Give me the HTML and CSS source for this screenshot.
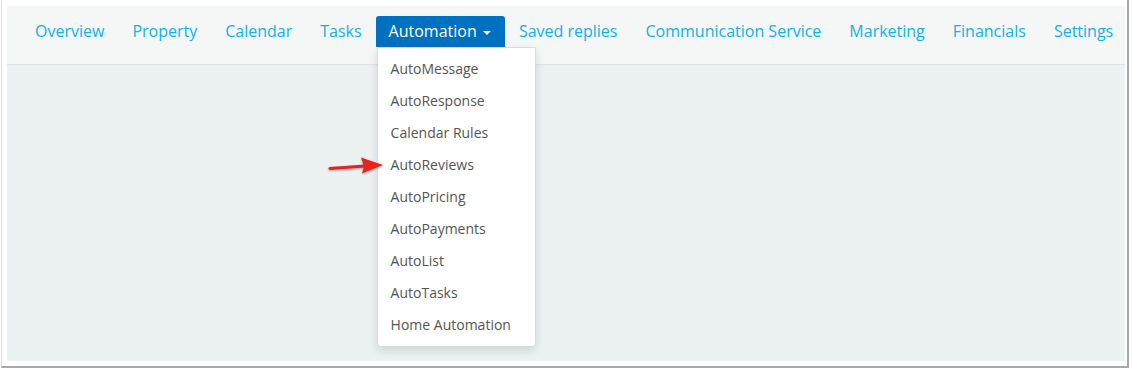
FILE: index.html
```html
<!DOCTYPE html>
<html>
<head>
    <title>Automation menu</title>
    <link rel="stylesheet" href="styles.css">
</head>
<body>
    <div class="frame">
        <div class="app">
            <nav class="navbar">
                <a class="nav-link" href="#">Overview</a>
                <a class="nav-link" href="#">Property</a>
                <a class="nav-link" href="#">Calendar</a>
                <a class="nav-link" href="#">Tasks</a>
                <div class="nav-dropdown">
                    <a class="nav-link active" href="#">Automation <span class="caret"></span></a>
                    <ul class="dropdown-menu">
                        <li><a href="#">AutoMessage</a></li>
                        <li><a href="#">AutoResponse</a></li>
                        <li><a href="#">Calendar Rules</a></li>
                        <li><a href="#">AutoReviews</a></li>
                        <li><a href="#">AutoPricing</a></li>
                        <li><a href="#">AutoPayments</a></li>
                        <li><a href="#">AutoList</a></li>
                        <li><a href="#">AutoTasks</a></li>
                        <li><a href="#">Home Automation</a></li>
                    </ul>
                    <svg class="pointer" width="60" height="24" viewBox="0 0 60 24">
                        <defs>
                            <filter id="sh" x="-20%" y="-40%" width="140%" height="180%">
                                <feDropShadow dx="0" dy="1" stdDeviation="1" flood-color="#000" flood-opacity="0.35"/>
                            </filter>
                        </defs>
                        <g filter="url(#sh)">
                            <line x1="3" y1="13.5" x2="38" y2="11" stroke="#e8211c" stroke-width="3" stroke-linecap="round"/>
                            <polygon points="56,10 34,2.5 37,11.5 35,18.5" fill="#e8211c"/>
                        </g>
                    </svg>
                </div>
                <a class="nav-link" href="#">Saved replies</a>
                <a class="nav-link" href="#">Communication Service</a>
                <a class="nav-link" href="#">Marketing</a>
                <a class="nav-link" href="#">Financials</a>
                <a class="nav-link" href="#">Settings</a>
            </nav>
            <div class="content"></div>
        </div>
    </div>
</body>
</html>
```

FILE: styles.css
```css
body {
    margin: 0;
    background-color: #ffffff;
    font-family: "Open Sans", Arial, sans-serif;
}
.frame {
    width: 1128px;
    height: 368px;
    margin-left: 1px;
    border-left: 1px solid #dcdcdc;
    border-right: 2px solid #a9a9a9;
    border-bottom: 2px solid #a9a9a9;
    background-color: #ffffff;
    padding: 6px 0 0 5px;
    box-sizing: border-box;
}
.app {
    width: 1118px;
    height: 355px;
    background-color: #ecf2f2;
    display: flex;
    flex-direction: column;
}
.navbar {
    display: flex;
    align-items: flex-start;
    height: 59px;
    padding: 10px 0 0 14px;
    background-color: #f5f7f7;
    border-bottom: 1px solid #dde3e4;
    box-sizing: border-box;
}
.nav-link {
    display: block;
    padding: 5px 14px 6px;
    font-size: 16px;
    line-height: 20px;
    color: #0fb1ea;
    text-decoration: none;
    white-space: nowrap;
}
.nav-dropdown {
    position: relative;
}
.nav-link.active {
    background-color: #0070c1;
    color: #ffffff;
    border-radius: 3px 3px 0 0;
    padding: 5px 14px 6px 13px;
}
.caret {
    display: inline-block;
    width: 0;
    height: 0;
    margin-left: 2px;
    vertical-align: middle;
    border-top: 4px solid #ffffff;
    border-left: 4px solid transparent;
    border-right: 4px solid transparent;
}
.dropdown-menu {
    position: absolute;
    top: 31px;
    left: 1px;
    margin: 0;
    padding: 5px 0;
    list-style: none;
    width: 159px;
    background-color: #ffffff;
    border: 1px solid #d9dcdd;
    border-radius: 0 0 4px 4px;
    box-shadow: 0 4px 10px rgba(0, 0, 0, 0.12);
    box-sizing: border-box;
    z-index: 10;
}
.dropdown-menu a {
    display: block;
    padding: 6px 13px;
    font-size: 14px;
    line-height: 20px;
    color: #555555;
    text-decoration: none;
}
.pointer {
    position: absolute;
    top: 139px;
    left: -49px;
    z-index: 11;
}
.content {
    flex: 1;
}
```
